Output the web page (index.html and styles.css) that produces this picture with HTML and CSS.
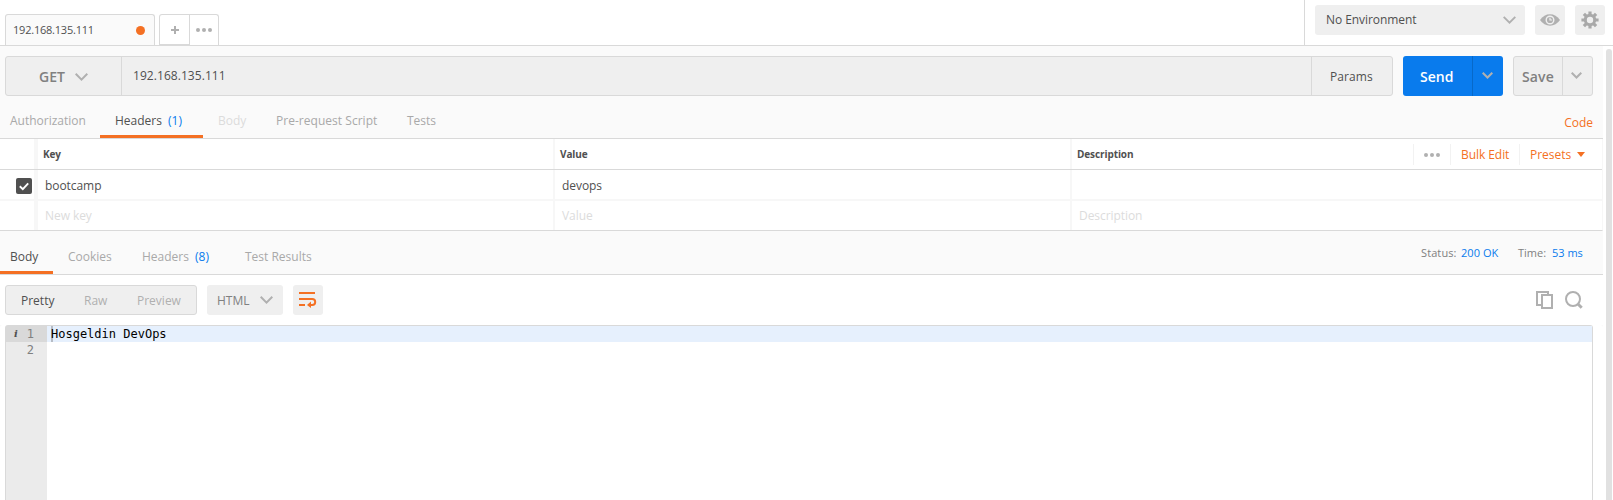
FILE: index.html
```html
<!DOCTYPE html>
<html lang="en">
<head>
<meta charset="utf-8">
<title>192.168.135.111</title>
<link rel="stylesheet" href="styles.css">
</head>
<body>
<header class="topbar">
  <div class="req-tab"><span>192.168.135.111</span><i class="unsaved"></i></div>
  <div class="tab-actions">
    <button class="tab-add"><svg width="8" height="8" viewBox="0 0 8 8"><path d="M4 0v8M0 4h8" stroke="#b0b0b0" stroke-width="2"/></svg></button>
    <button class="tab-more"><svg width="16" height="4" viewBox="0 0 16 4" fill="#b0b0b0"><circle cx="2" cy="2" r="2"/><circle cx="8" cy="2" r="2"/><circle cx="14" cy="2" r="2"/></svg></button>
  </div>
  <div class="env">
    <div class="env-select"><span>No Environment</span><svg width="13" height="8" viewBox="0 0 13 8"><path d="M.7.8 6.5 6.6 12.3.8" fill="none" stroke="#b0b0b0" stroke-width="1.9"/></svg></div>
    <button class="icon-btn"><svg width="20" height="12" viewBox="0 0 20 12"><path d="M0 6Q4 .3 10 .3T20 6Q16 11.7 10 11.7T0 6Z" fill="#b0b0b0"/><circle cx="10" cy="6" r="3.8" fill="none" stroke="#efefef" stroke-width="1.4"/><path d="M10 3.8V6h2.2" fill="none" stroke="#efefef" stroke-width="1.2"/></svg></button>
    <button class="icon-btn"><svg width="18" height="18" viewBox="-9 -9 18 18"><g stroke="#a9a9a9" stroke-width="3.2"><path d="M0-8.6V8.6M-8.6 0H8.6M-6.1-6.1 6.1 6.1M6.1-6.1-6.1 6.1"/></g><circle r="6.2" fill="#a9a9a9"/><circle r="3.2" fill="#efefef"/></svg></button>
  </div>
</header>
<main class="main">
  <div class="url-row">
    <div class="url-box">
      <div class="method"><span>GET</span><svg width="13" height="8" viewBox="0 0 13 8"><path d="M.7.8 6.5 6.6 12.3.8" fill="none" stroke="#b0b0b0" stroke-width="2"/></svg></div>
      <div class="url">192.168.135.111</div>
      <div class="params">Params</div>
    </div>
    <div class="send"><span>Send</span><div class="drop"><svg width="11" height="7" viewBox="0 0 11 7"><path d="M.7.7 5.5 5.5 10.3.7" fill="none" stroke="#b0b0b0" stroke-width="2"/></svg></div></div>
    <div class="save"><span>Save</span><div class="drop"><svg width="11" height="7" viewBox="0 0 11 7"><path d="M.7.7 5.5 5.5 10.3.7" fill="none" stroke="#b0b0b0" stroke-width="2"/></svg></div></div>
  </div>
  <nav class="tabs req-tabs">
    <a class="t-auth">Authorization</a>
    <a class="t-headers active">Headers <b>(1)</b></a>
    <a class="t-body disabled">Body</a>
    <a class="t-pre">Pre-request Script</a>
    <a class="t-tests">Tests</a>
    <a class="code">Code</a>
  </nav>
  <section class="table">
    <div class="row head">
      <div class="check"></div><div class="cell">Key</div><div class="cell">Value</div>
      <div class="cell last"><span>Description</span>
        <div class="tools">
          <div class="tool more"><svg width="16" height="4" viewBox="0 0 16 4" fill="#b0b0b0"><circle cx="2" cy="2" r="2"/><circle cx="8" cy="2" r="2"/><circle cx="14" cy="2" r="2"/></svg></div>
          <div class="tool bulk">Bulk Edit</div>
          <div class="tool presets">Presets<svg width="8" height="5" viewBox="0 0 8 5"><path d="M0 0h8L4 5z" fill="#f47023"/></svg></div>
        </div>
      </div>
    </div>
    <div class="row">
      <div class="check"><span class="box"><svg width="10" height="9" viewBox="0 0 10 9"><path d="M.8 4.3 3.8 7.2 9.2 1.4" fill="none" stroke="#fff" stroke-width="1.9"/></svg></span></div>
      <div class="cell">bootcamp</div><div class="cell">devops</div><div class="cell last"></div>
    </div>
    <div class="row ghost">
      <div class="check"></div><div class="cell">New key</div><div class="cell">Value</div><div class="cell last">Description</div>
    </div>
  </section>
  <nav class="tabs res-tabs">
    <a class="r-body active">Body</a>
    <a class="r-cookies">Cookies</a>
    <a class="r-headers">Headers <b>(8)</b></a>
    <a class="r-tests">Test Results</a>
    <div class="status"><span class="s-label">Status:</span><span class="s-code">200 OK</span><span class="t-label">Time:</span><span class="t-value">53 ms</span></div>
  </nav>
  <div class="view-row">
    <div class="modes"><span class="m-pretty">Pretty</span><span class="m-raw">Raw</span><span class="m-preview">Preview</span></div>
    <div class="lang"><span>HTML</span><svg width="13" height="8" viewBox="0 0 13 8"><path d="M.7.8 6.5 6.6 12.3.8" fill="none" stroke="#b0b0b0" stroke-width="2"/></svg></div>
    <button class="icon-btn wrap"><svg width="18" height="16" viewBox="0 0 18 16" fill="none" stroke="#f47023" stroke-width="2"><path d="M0 1h16M0 7h13.2a2.9 2.9 0 0 1 0 6H10M0 13h6"/><path d="M12 9.6v6.4L8 12.9z" fill="#f47023" stroke="none"/></svg></button>
    <div class="view-icons">
      <svg width="18" height="18" viewBox="0 0 18 18" fill="none" stroke="#b0b0b0" stroke-width="2"><path d="M5 14H1V1h11v2M6 4h10v13H6z"/></svg>
      <svg width="18" height="18" viewBox="0 0 18 18" fill="none" stroke="#b0b0b0"><circle cx="8" cy="8" r="7" stroke-width="2"/><path d="m12.7 12.7 4 4" stroke-width="3"/></svg>
    </div>
  </div>
  <section class="editor">
    <div class="line current"><div class="gutter"><i>i</i><span>1</span></div><code>Hosgeldin DevOps</code></div>
    <div class="line"><div class="gutter"><span>2</span></div><code></code></div>
    <div class="line rest"><div class="gutter"></div></div>
  </section>
</main>
<div class="scroll"></div>
</body>
</html>
```
FILE: styles.css
```css
* { box-sizing: border-box; }
body { margin: 0; width: 1613px; height: 500px; overflow: hidden; background: #fff; color: #505050; font: 12px/18px "Open Sans", "Noto Sans", sans-serif; display: grid; grid-template: 46px 454px / 1603px 10px; }
button { border: 0; padding: 0; margin: 0; background: none; display: flex; align-items: center; justify-content: center; }
svg { display: block; flex: none; }
.topbar { grid-column: 1 / 3; display: flex; align-items: flex-end; border-bottom: 1px solid #d9d9d9; padding-left: 5px; }
.req-tab { width: 150px; height: 31px; border: 1px solid #d9d9d9; border-bottom: 0; border-radius: 3px 3px 0 0; background: #fafafa; display: flex; align-items: center; justify-content: space-between; padding: 0 9px 0 7px; font-size: 11px; letter-spacing: -.22px; }
.unsaved { width: 9px; height: 9px; border-radius: 50%; background: #f47023; }
.tab-actions { display: flex; align-self: flex-end; width: 60px; height: 31px; margin-left: 4px; border: 1px solid #d9d9d9; border-bottom: 0; border-radius: 3px 3px 0 0; }
.tab-add { width: 30px; height: 30px; border-right: 1px solid #d9d9d9; border-bottom: 1px solid #d9d9d9; }
.tab-more { width: 28px; height: 30px; }
.env { margin-left: auto; width: 309px; height: 45px; border-left: 1px solid #d9d9d9; padding: 5px 8px 0 10px; display: flex; gap: 10px; }
.env-select { width: 210px; height: 30px; background: #efefef; border-radius: 3px; display: flex; align-items: center; justify-content: space-between; padding: 0 9px 0 11px; letter-spacing: -.06px; }
.icon-btn { width: 30px; height: 30px; background: #efefef; border-radius: 3px; }
.main { height: 454px; display: flex; flex-direction: column; background: #fafafa; }
.url-row { display: flex; gap: 10px; padding: 10px 10px 0 5px; height: 56px; flex: none; }
.url-row > div { height: 40px; border-radius: 3px; display: flex; align-items: center; }
.url-box { width: 1388px; background: #efefef; border: 1px solid #d9d9d9; }
.method { width: 116px; height: 38px; border-right: 1px solid #d9d9d9; display: flex; align-items: center; padding: 2px 0 0 33px; gap: 10px; font-size: 14px; font-weight: 600; color: #808080; }
.url { flex: 1; padding-left: 11px; letter-spacing: .06px; }
.params { width: 81px; height: 38px; border-left: 1px solid #d9d9d9; padding: 11px 0 0 18px; letter-spacing: .1px; }
.send, .save { font-size: 14px; font-weight: 600; }
.send { width: 100px; background: #097bed; color: #fff; }
.send > span { width: 69px; padding: 2px 0 0 17px; }
.send .drop { width: 31px; height: 40px; border-left: 1px solid #0769c9; }
.save { width: 80px; border: 1px solid #d9d9d9; background: #efefef; color: #808080; }
.save > span { width: 48px; padding: 2px 0 0 8px; letter-spacing: .15px; }
.save .drop { width: 30px; height: 38px; border-left: 1px solid #d9d9d9; }
.drop { display: flex; align-items: center; justify-content: center; padding: 0 2px 1px 0; }
.tabs { flex: none; display: flex; border-bottom: 1px solid #d9d9d9; color: #a9a9a9; }
.tabs a { white-space: pre; border-bottom: 3px solid transparent; }
.tabs b { font-weight: 400; color: #097bed; margin-left: 3px; }
.tabs .active { color: #505050; border-color: #f47023; }
.tabs .disabled { color: #dcdcdc; }
.req-tabs { height: 37px; }
.req-tabs a { padding-top: 10px; }
.t-auth { width: 100px; padding-left: 10px; }
.t-headers { width: 103px; padding-left: 15px; }
.t-body { width: 58px; margin-left: 15px; }
.t-pre { width: 131px; letter-spacing: .03px; }
.tabs .code { margin-left: auto; padding: 12px 10px 0 0; color: #f47023; }
.table { flex: none; height: 92px; background: #fff; border-bottom: 1px solid #d9d9d9; border-right: 1px solid #f7f7f7; }
.row { display: flex; height: 31px; border-bottom: 2px solid #f7f7f7; }
.row.head { height: 31px; border-bottom: 1px solid #d9d9d9; font-size: 10px; font-weight: 700; letter-spacing: -.1px; }
.row.ghost { height: 29px; color: #dcdcdc; border: 0; }
.ghost .cell { padding-top: 6px; }
.check { width: 38px; border-right: 4px solid #f7f7f7; padding: 8px 0 0 16px; }
.box { width: 16px; height: 16px; border-radius: 2px; background: #505050; display: flex; align-items: center; justify-content: center; }
.cell { width: 517px; border-right: 2px solid #f7f7f7; padding: 7px 0 0 7px; display: flex; align-items: flex-start; letter-spacing: -.06px; }
.head .cell { padding: 6px 0 0 5px; letter-spacing: -.1px; }
.cell.last { flex: 1; border: 0; }
.tools { margin: -1px 0 0 auto; display: flex; font-size: 12px; font-weight: 400; letter-spacing: 0; color: #f47023; }
.tool { height: 21px; border-left: 1px solid #f2f2f2; display: flex; align-items: center; }
.more { width: 37px; padding-left: 10px; }
.bulk { width: 69px; padding-left: 10px; letter-spacing: -.06px; }
.presets { width: 83px; padding-left: 10px; gap: 6px; }
.res-tabs { height: 44px; }
.res-tabs a { padding-top: 17px; }
.r-body { width: 53px; padding-left: 10px; }
.r-cookies { width: 89px; padding-left: 15px; }
.r-headers { width: 103px; }
.status { margin-left: auto; width: 182px; padding-top: 13px; display: flex; font-size: 11px; color: #808080; }
.s-label { width: 40px; letter-spacing: .1px; }
.s-code { width: 57px; color: #097bed; letter-spacing: .05px; }
.t-label { width: 34px; }
.t-value { color: #097bed; }
.view-row { flex: none; height: 50px; background: #fff; padding: 10px 20px 0 5px; display: flex; gap: 10px; }
.modes { width: 192px; height: 30px; background: #efefef; border: 1px solid #d9d9d9; border-radius: 3px; padding: 6px 0 0 15px; display: flex; color: #b0b0b0; }
.m-pretty { width: 63px; color: #505050; }
.m-raw { width: 53px; }
.lang { width: 76px; height: 30px; background: #efefef; border-radius: 3px; display: flex; align-items: center; padding-left: 10px; gap: 10px; color: #808080; }
.lang span { padding-top: 1px; }
.view-icons { margin: 6px 0 0 auto; display: flex; gap: 11px; }
.editor { width: 1588px; height: 175px; margin-left: 5px; border: 1px solid #d9d9d9; border-bottom: 0; border-radius: 3px 3px 0 0; background: #fff; box-shadow: -5px 0 #fff, 10px 0 #fff; display: flex; flex-direction: column; font: 12px/16px "DejaVu Sans Mono", monospace; }
.line { height: 16px; display: flex; }
.line.rest { flex: 1; }
.gutter { width: 41px; background: #ebebeb; color: #808080; display: flex; justify-content: flex-end; padding-right: 13px; }
.gutter i { font: italic bold 10px/16px "DejaVu Serif", serif; color: #505050; margin-right: 9px; }
.current { background: #e6f0fd; }
.current .gutter { background: #d9d9d9; }
.current code { border-left: 2px solid #b6bcc5; margin-left: 4px; }
.line code { font: inherit; color: #000; text-indent: -2px; }
.scroll { width: 6px; height: 460px; margin: 3px 0 0 3px; border-radius: 3px 3px 0 0; background: #e1e1e1; }
```
